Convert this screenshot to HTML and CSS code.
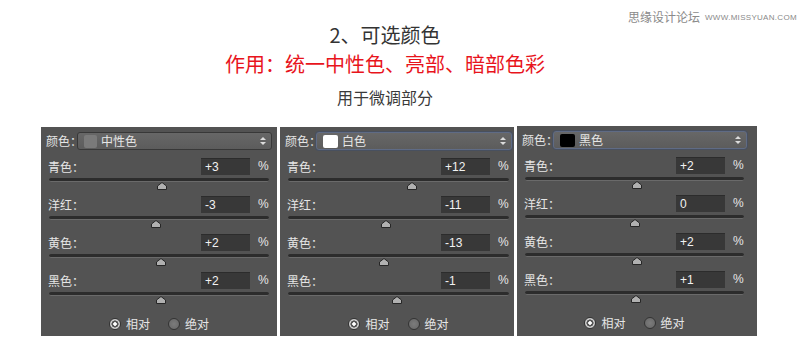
FILE: index.html
```html
<!DOCTYPE html>
<html lang="zh-CN">

<head>
    <meta charset="UTF-8">
    <meta name="viewport" content="width=device-width, initial-scale=1.0">
    <title>可选颜色</title>
    <link rel="stylesheet" href="styles.css">
</head>

<body>
    <div class="page">
        <div class="mark"><span class="mark-cn">思缘设计论坛</span><span class="mark-en">WWW.MISSYUAN.COM</span></div>

        <div class="intro">
            <div class="title">2、可选颜色</div>
            <div class="use">作用：统一中性色、亮部、暗部色彩</div>
            <div class="sub">用于微调部分</div>
        </div>

        <div class="panels">
            <!-- 中性色 -->
            <div class="panel panel-one">
                <div class="panel-top">
                    <span class="lbl">颜色：</span>
                    <div class="select">
                        <span class="swatch swatch-gray"></span>
                        <span class="select-text">中性色</span>
                        <svg class="updown" width="6" height="10" viewBox="0 0 6 10"><polygon points="0,4 3,1 6,4" /><polygon points="0,6 3,9 6,6" /></svg>
                    </div>
                </div>
                <div class="row">
                    <div class="row-head"><span class="name">青色：</span><span class="val">+3</span><span class="pct">%</span></div>
                    <div class="track"><svg class="thumb" style="left: 51.5%" width="11" height="8" viewBox="0 0 11 8"><polygon points="1,7.5 1,4 5.5,0.5 10,4 10,7.5" /></svg></div>
                </div>
                <div class="row">
                    <div class="row-head"><span class="name">洋红：</span><span class="val">-3</span><span class="pct">%</span></div>
                    <div class="track"><svg class="thumb" style="left: 48.5%" width="11" height="8" viewBox="0 0 11 8"><polygon points="1,7.5 1,4 5.5,0.5 10,4 10,7.5" /></svg></div>
                </div>
                <div class="row">
                    <div class="row-head"><span class="name">黄色：</span><span class="val">+2</span><span class="pct">%</span></div>
                    <div class="track"><svg class="thumb" style="left: 51%" width="11" height="8" viewBox="0 0 11 8"><polygon points="1,7.5 1,4 5.5,0.5 10,4 10,7.5" /></svg></div>
                </div>
                <div class="row">
                    <div class="row-head"><span class="name">黑色：</span><span class="val">+2</span><span class="pct">%</span></div>
                    <div class="track"><svg class="thumb" style="left: 51%" width="11" height="8" viewBox="0 0 11 8"><polygon points="1,7.5 1,4 5.5,0.5 10,4 10,7.5" /></svg></div>
                </div>
                <div class="radios">
                    <span class="radio on"></span><span class="radio-text">相对</span>
                    <span class="radio"></span><span class="radio-text">绝对</span>
                </div>
            </div>

            <!-- 白色 -->
            <div class="panel panel-two">
                <div class="panel-top">
                    <span class="lbl">颜色：</span>
                    <div class="select focus">
                        <span class="swatch swatch-white"></span>
                        <span class="select-text">白色</span>
                        <svg class="updown" width="6" height="10" viewBox="0 0 6 10"><polygon points="0,4 3,1 6,4" /><polygon points="0,6 3,9 6,6" /></svg>
                    </div>
                </div>
                <div class="row">
                    <div class="row-head"><span class="name">青色：</span><span class="val">+12</span><span class="pct">%</span></div>
                    <div class="track"><svg class="thumb" style="left: 56%" width="11" height="8" viewBox="0 0 11 8"><polygon points="1,7.5 1,4 5.5,0.5 10,4 10,7.5" /></svg></div>
                </div>
                <div class="row">
                    <div class="row-head"><span class="name">洋红：</span><span class="val">-11</span><span class="pct">%</span></div>
                    <div class="track"><svg class="thumb" style="left: 44.5%" width="11" height="8" viewBox="0 0 11 8"><polygon points="1,7.5 1,4 5.5,0.5 10,4 10,7.5" /></svg></div>
                </div>
                <div class="row">
                    <div class="row-head"><span class="name">黄色：</span><span class="val">-13</span><span class="pct">%</span></div>
                    <div class="track"><svg class="thumb" style="left: 43.5%" width="11" height="8" viewBox="0 0 11 8"><polygon points="1,7.5 1,4 5.5,0.5 10,4 10,7.5" /></svg></div>
                </div>
                <div class="row">
                    <div class="row-head"><span class="name">黑色：</span><span class="val">-1</span><span class="pct">%</span></div>
                    <div class="track"><svg class="thumb" style="left: 49.5%" width="11" height="8" viewBox="0 0 11 8"><polygon points="1,7.5 1,4 5.5,0.5 10,4 10,7.5" /></svg></div>
                </div>
                <div class="radios">
                    <span class="radio on"></span><span class="radio-text">相对</span>
                    <span class="radio"></span><span class="radio-text">绝对</span>
                </div>
            </div>

            <!-- 黑色 -->
            <div class="panel panel-three">
                <div class="panel-top">
                    <span class="lbl">颜色：</span>
                    <div class="select focus">
                        <span class="swatch swatch-black"></span>
                        <span class="select-text">黑色</span>
                        <svg class="updown" width="6" height="10" viewBox="0 0 6 10"><polygon points="0,4 3,1 6,4" /><polygon points="0,6 3,9 6,6" /></svg>
                    </div>
                </div>
                <div class="row">
                    <div class="row-head"><span class="name">青色：</span><span class="val">+2</span><span class="pct">%</span></div>
                    <div class="track"><svg class="thumb" style="left: 51%" width="11" height="8" viewBox="0 0 11 8"><polygon points="1,7.5 1,4 5.5,0.5 10,4 10,7.5" /></svg></div>
                </div>
                <div class="row">
                    <div class="row-head"><span class="name">洋红：</span><span class="val">0</span><span class="pct">%</span></div>
                    <div class="track"><svg class="thumb" style="left: 50%" width="11" height="8" viewBox="0 0 11 8"><polygon points="1,7.5 1,4 5.5,0.5 10,4 10,7.5" /></svg></div>
                </div>
                <div class="row">
                    <div class="row-head"><span class="name">黄色：</span><span class="val">+2</span><span class="pct">%</span></div>
                    <div class="track"><svg class="thumb" style="left: 51%" width="11" height="8" viewBox="0 0 11 8"><polygon points="1,7.5 1,4 5.5,0.5 10,4 10,7.5" /></svg></div>
                </div>
                <div class="row">
                    <div class="row-head"><span class="name">黑色：</span><span class="val">+1</span><span class="pct">%</span></div>
                    <div class="track"><svg class="thumb" style="left: 50.5%" width="11" height="8" viewBox="0 0 11 8"><polygon points="1,7.5 1,4 5.5,0.5 10,4 10,7.5" /></svg></div>
                </div>
                <div class="radios">
                    <span class="radio on"></span><span class="radio-text">相对</span>
                    <span class="radio"></span><span class="radio-text">绝对</span>
                </div>
            </div>
        </div>
    </div>
</body>

</html>
```

FILE: styles.css
```css
* {
    box-sizing: border-box;
    font-family: "Noto Sans CJK SC", sans-serif;
}

body {
    margin: 0;
    padding: 0;
    background-color: #ffffff;
}

.page {
    width: 800px;
    height: 350px;
    position: relative;
    overflow: hidden;
}

/* watermark top right */
.mark {
    position: absolute;
    top: 9px;
    left: 628px;
    display: flex;
    align-items: center;
    color: #8a8a8a;
}

.mark-cn {
    font-size: 12px;
    line-height: 16px;
}

.mark-en {
    font-family: "Liberation Sans", sans-serif;
    font-size: 8px;
    margin-left: 5px;
    letter-spacing: 0.3px;
}

.intro {
    padding-top: 21px;
    padding-right: 30px;
    text-align: center;
}

.title {
    font-size: 20px;
    line-height: 28px;
    color: #333;
}

.use {
    font-size: 20px;
    line-height: 30px;
    color: #e8141c;
}

.sub {
    font-size: 16px;
    line-height: 24px;
    margin-top: 6px;
    color: #3a3a3a;
}

.panels {
    display: flex;
    gap: 3px;
    margin-top: 18px;
    padding-left: 41px;
}

.panel {
    background-color: #535353;
    padding: 5px 5px 5px 5px;
    color: #e6e6e6;
    font-size: 12px;
}

.panel-one {
    width: 236px;
}

.panel-two {
    width: 234px;
    padding-right: 2px;
}

.panel-three {
    width: 240px;
    padding-right: 10px;
    margin-top: -1px;
}

.panel-top {
    display: flex;
    align-items: center;
    height: 18px;
}

.lbl {
    width: 31px;
    line-height: 18px;
    white-space: nowrap;
}

.select {
    flex: 1;
    height: 18px;
    display: flex;
    align-items: center;
    border: 1px solid #383838;
    border-radius: 3px;
    background: linear-gradient(#676767, #5c5c5c);
    padding: 0 5px 0 6px;
}

.select.focus {
    border-color: #5f6b85;
    box-shadow: 0 0 0 1px #48505f;
}

.swatch {
    width: 13px;
    height: 13px;
    border-radius: 2px;
    margin-right: 4px;
}

.swatch-gray {
    background-color: #7a7a7a;
}

.swatch-white {
    width: 15px;
    background-color: #ffffff;
}

.swatch-black {
    width: 15px;
    background-color: #000000;
}

.select-text {
    flex: 1;
    line-height: 16px;
}

.updown {
    fill: #dcdcdc;
}

.row-head {
    display: flex;
    align-items: center;
    height: 17px;
    margin-top: 8px;
    padding-left: 2px;
}

.row + .row .row-head {
    margin-top: 0;
}

.name {
    flex: 1;
    line-height: 17px;
}

.val {
    width: 49px;
    height: 17px;
    background-color: #383838;
    border-top: 1px solid #2c2c2c;
    color: #f2f2f2;
    font-family: "Liberation Sans", sans-serif;
    font-size: 12px;
    line-height: 16px;
    padding-left: 4px;
}

.pct {
    width: 22px;
    padding-left: 8px;
    font-family: "Liberation Sans", sans-serif;
    font-size: 12px;
    line-height: 17px;
    align-self: flex-start;
}

.track {
    position: relative;
    height: 4px;
    margin: 3px 3px 14px 3px;
    background-color: #2c2c2c;
    border-bottom: 1px solid #6a6a6a;
    border-radius: 2px;
}

.thumb {
    position: absolute;
    top: 4px;
    transform: translateX(-50%);
    fill: #b0b0b0;
    stroke: #262626;
    stroke-width: 1;
}

.radios {
    display: flex;
    align-items: center;
    justify-content: center;
    height: 14px;
    margin-top: 21px;
}

.radio {
    width: 12px;
    height: 12px;
    border-radius: 50%;
    border: 1px solid #343434;
    background: radial-gradient(circle, #7c7c7c, #666666);
    margin-right: 5px;
}

.radio.on {
    background: radial-gradient(circle, #ffffff 0 1.5px, #555555 2px 3.3px, #cdcdcd 3.8px);
}

.radio-text {
    line-height: 14px;
    margin-right: 18px;
}

.radio-text:last-child {
    margin-right: 0;
}
```
